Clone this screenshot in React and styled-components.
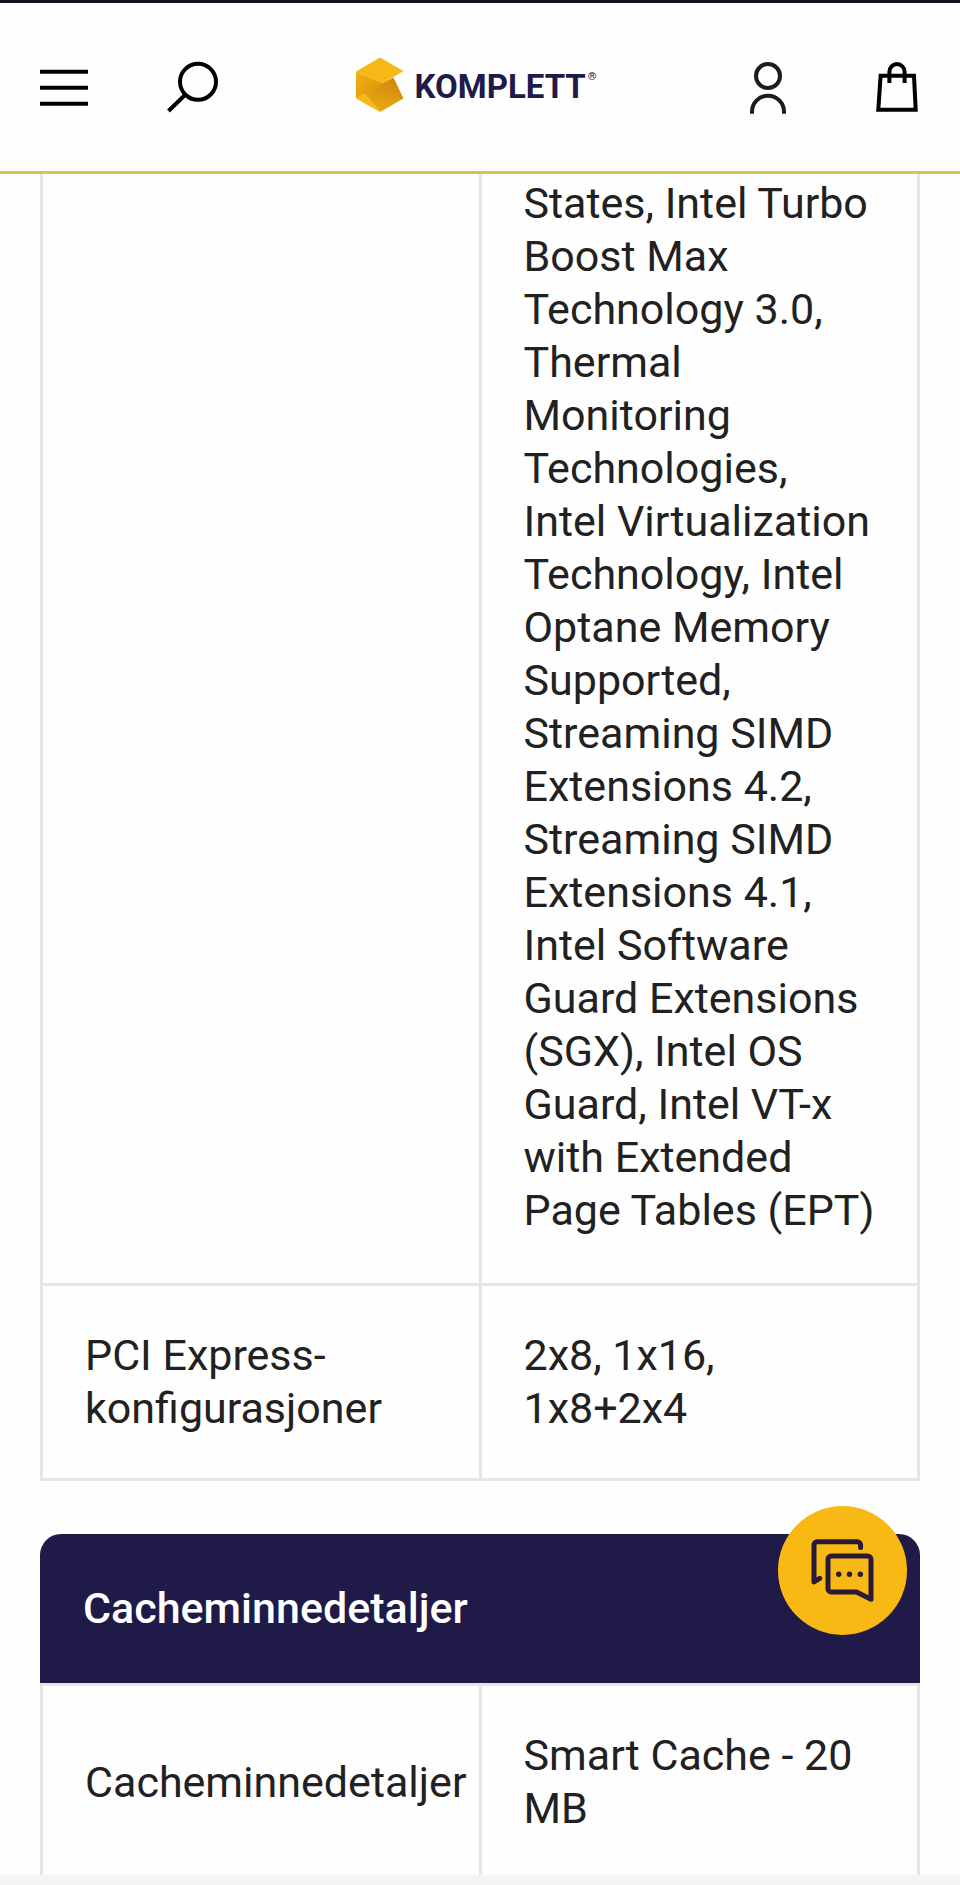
import React from "react";
import styled, { createGlobalStyle } from "styled-components";

const navy = "#201a49";
const line = "#e5e5e5";

const GlobalStyle = createGlobalStyle`
  * { box-sizing: border-box; }
  body {
    margin: 0;
    background: #fefefe;
    color: #212121;
    font-family: Roboto, "Liberation Sans", sans-serif;
    font-size: 43px;
    line-height: 53px;
  }
`;

const Page = styled.div`
  min-height: 100vh;
`;

const Header = styled.header`
  position: sticky;
  top: 0;
  z-index: 2;
  display: grid;
  grid-template-columns: 1fr auto 1fr;
  align-items: center;
  height: 174px;
  padding: 0 40px 2px;
  background: #fefefe;
  border-top: 3px solid #15141f;
  border-bottom: 3px solid #e0bf52;
`;

const Actions = styled.div`
  display: flex;
  align-items: center;
  justify-content: ${(p) => (p.$end ? "flex-end" : "flex-start")};
  gap: ${(p) => (p.$end ? 88 : 78)}px;
`;

const IconButton = styled.button`
  display: flex;
  padding: 0;
  border: 0;
  background: none;
  color: ${(p) => p.$color || "#000"};
  cursor: pointer;

  svg {
    display: block;
    overflow: visible;
    fill: none;
    stroke: currentColor;
    stroke-width: 4;
  }
`;

const Logo = styled.a`
  display: flex;
  align-items: center;
  gap: 11px;
  padding: 0 8px 2px 0;
  color: ${navy};
  text-decoration: none;
`;

const Wordmark = styled.span`
  display: flex;
  align-items: flex-start;
  gap: 2px;
  padding-top: 3px;
  font-size: 33px;
  font-weight: 700;
  line-height: 40px;
`;

const Registered = styled.span`
  font-size: 11px;
  font-weight: 500;
  line-height: 20px;
`;

const Content = styled.main`
  padding: 0 40px;
`;

const SpecSection = styled.section`
  & + & {
    margin-top: 53px;
  }
`;

const SectionTitle = styled.h2`
  margin: 0;
  padding: 48px 43px;
  border-radius: 21px 21px 0 0;
  background: ${navy};
  color: #fff;
  font-size: 43px;
  font-weight: 500;
  line-height: 53px;
`;

const SpecTable = styled.table`
  width: 100%;
  table-layout: fixed;
  border-collapse: collapse;
`;

const cell = ({ $continued }) => ($continued ? "3px 42px 46px" : "43px 42px");

const Label = styled.th`
  padding: ${cell};
  border: 3px solid ${line};
  border-top-width: ${(p) => (p.$continued ? 0 : 3)}px;
  font-weight: 400;
  text-align: left;
`;

const Value = styled.td`
  padding: ${cell};
  border: 3px solid ${line};
  border-top-width: ${(p) => (p.$continued ? 0 : 3)}px;
`;

const ChatButton = styled.button`
  position: fixed;
  right: 53px;
  bottom: 250px;
  z-index: 3;
  width: 129px;
  height: 129px;
  padding: 0;
  border: 0;
  border-radius: 50%;
  background: #f8b914;
  color: #2a1a35;
  cursor: pointer;

  svg { display: block; }
`;

const BottomBar = styled.div`
  position: fixed;
  left: 0;
  right: 0;
  bottom: 0;
  z-index: 2;
  height: 10px;
  background: #f4f4f4;
`;

const MenuIcon = () => (
  <svg width="48" height="52" viewBox="0 0 48 52" aria-hidden="true">
    <path d="M0 11.8h48M0 27.8h48M0 43.8h48" />
  </svg>
);

const SearchIcon = () => (
  <svg width="52" height="52" viewBox="0 0 52 52" aria-hidden="true">
    <circle cx="32" cy="21.8" r="18" />
    <path d="M2.5 51 19.5 34.5" />
  </svg>
);

const UserIcon = () => (
  <svg width="40" height="52" viewBox="0 0 40 52" aria-hidden="true">
    <circle cx="20" cy="16" r="12" />
    <path d="M4 53.7v-2a16 16 0 0 1 32 0v2" />
  </svg>
);

const BagIcon = () => (
  <svg width="44" height="52" viewBox="0 0 44 52" aria-hidden="true">
    <path d="M4.6 15.8h33.4l1.7 34H2.3zM13.4 23V11.7a7.6 7.6 0 0 1 15.2 0V23" />
  </svg>
);

const LogoMark = () => (
  <svg width="48" height="56" viewBox="0 0 48 56" aria-hidden="true">
    <defs>
      <linearGradient id="markSide" x1="0" y1="0" x2="1" y2="1">
        <stop offset="0" stopColor="#f2b10f" />
        <stop offset="1" stopColor="#d9920a" />
      </linearGradient>
      <linearGradient id="markInner" x1="0.8" y1="0" x2="0.4" y2="1">
        <stop offset="0" stopColor="#cf860c" />
        <stop offset="1" stopColor="#eeaa12" />
      </linearGradient>
    </defs>
    <path d="M0 14.5 24 0.5 47.5 14 27 26.3z" fill="#f6b814" />
    <path d="M0 14.5 27 26.3 15 33 0 41.5z" fill="url(#markSide)" />
    <path d="M0 41.5 8.5 36.5 24 55z" fill="#f8b914" />
    <path d="M8.5 36.5 15 32.5 37.5 20.5 47.5 41.5 24 55z" fill="url(#markInner)" />
  </svg>
);

const ChatIcon = () => (
  <svg
    width="129"
    height="129"
    viewBox="0 0 129 129"
    fill="none"
    stroke="currentColor"
    strokeWidth="5"
    strokeLinecap="round"
    strokeLinejoin="round"
    aria-hidden="true"
  >
    <path d="M82.6 41.5V39a3.3 3.3 0 0 0-3.3-3.3H39.3A3.3 3.3 0 0 0 36 39v37l5.7-3.6" />
    <path d="M53.3 50H89.7a3.3 3.3 0 0 1 3.3 3.3V93.2L78.5 86H53.3A3.3 3.3 0 0 1 50 82.7V53.3A3.3 3.3 0 0 1 53.3 50z" />
    <g fill="currentColor" stroke="none">
      <circle cx="60.7" cy="68.3" r="2.7" />
      <circle cx="71.5" cy="68.3" r="2.7" />
      <circle cx="82.3" cy="68.3" r="2.7" />
    </g>
  </svg>
);

export default function App() {
  return (
    <Page>
      <GlobalStyle />
      <Header>
        <Actions>
          <IconButton aria-label="Meny"><MenuIcon /></IconButton>
          <IconButton aria-label="Søk"><SearchIcon /></IconButton>
        </Actions>
        <Logo href="#">
          <LogoMark />
          <Wordmark>
            KOMPLETT
            <Registered>®</Registered>
          </Wordmark>
        </Logo>
        <Actions $end>
          <IconButton aria-label="Min side" $color="#1c1c1c"><UserIcon /></IconButton>
          <IconButton aria-label="Handlekurv"><BagIcon /></IconButton>
        </Actions>
      </Header>

      <Content>
        <SpecSection>
          <SpecTable>
            <tbody>
              <tr>
                <Label scope="row" $continued />
                <Value $continued>
                  States, Intel Turbo Boost Max Technology 3.0, Thermal
                  Monitoring Technologies, Intel Virtualization Technology,
                  Intel Optane Memory Supported, Streaming SIMD Extensions 4.2,
                  Streaming SIMD Extensions 4.1, Intel Software Guard
                  Extensions (SGX), Intel OS Guard, Intel VT-x with Extended
                  Page Tables (EPT)
                </Value>
              </tr>
              <tr>
                <Label scope="row">PCI Express-konfigurasjoner</Label>
                <Value>2x8, 1x16, 1x8+2x4</Value>
              </tr>
            </tbody>
          </SpecTable>
        </SpecSection>

        <SpecSection>
          <SectionTitle>Cacheminnedetaljer</SectionTitle>
          <SpecTable>
            <tbody>
              <tr>
                <Label scope="row">Cacheminnedetaljer</Label>
                <Value>Smart Cache - 20 MB</Value>
              </tr>
            </tbody>
          </SpecTable>
        </SpecSection>
      </Content>

      <ChatButton aria-label="Chat"><ChatIcon /></ChatButton>
      <BottomBar />
    </Page>
  );
}
